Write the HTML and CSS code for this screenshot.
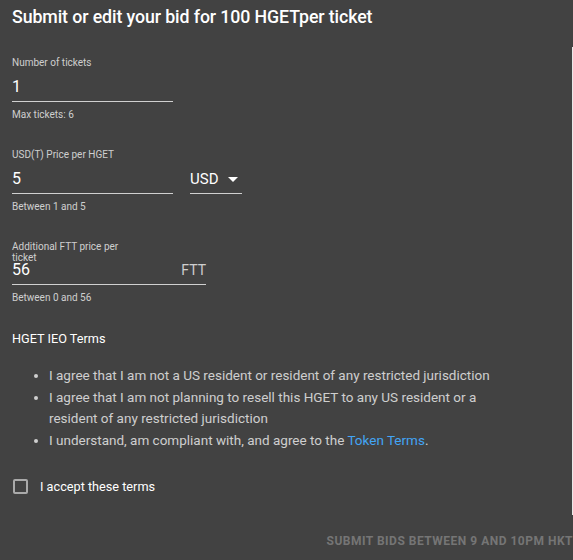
FILE: index.html
```html
<!DOCTYPE html>
<html>
<head>
<meta charset="utf-8">
<link rel="stylesheet" href="styles.css">
</head>
<body>
<div class="dialog">
  <h2 class="title">Submit or edit your bid for 100 HGETper ticket</h2>
  <div class="content">
    <div class="field">
      <label class="label">Number of tickets</label>
      <div class="input w160"><span class="value">1</span></div>
      <div class="helper">Max tickets: 6</div>
    </div>
    <div class="row">
      <div class="field">
        <label class="label">USD(T) Price per HGET</label>
        <div class="input w160"><span class="value">5</span></div>
        <div class="helper">Between 1 and 5</div>
      </div>
      <div class="select">
        <span class="value">USD</span>
        <svg class="arrow" width="10" height="5" viewBox="0 0 10 5"><path d="M0 0 L10 0 L5 5 Z" fill="#fff"/></svg>
      </div>
    </div>
    <div class="field last">
      <label class="label narrow">Additional FTT price per ticket</label>
      <div class="input w194 tight"><span class="value">56</span><span class="suffix">FTT</span></div>
      <div class="helper">Between 0 and 56</div>
    </div>
    <h3 class="terms-title">HGET IEO Terms</h3>
    <ul class="terms">
      <li>I agree that I am not a US resident or resident of any restricted jurisdiction</li>
      <li>I agree that I am not planning to resell this HGET to any US resident or a resident of any restricted jurisdiction</li>
      <li>I understand, am compliant with, and agree to the <a href="#">Token Terms</a>.</li>
    </ul>
    <div class="check">
      <span class="box"></span>
      <span class="check-label">I accept these terms</span>
    </div>
  </div>
  <div class="actions">
    <span class="btn">SUBMIT BIDS BETWEEN 9 AND 10PM HKT</span>
  </div>
  <div class="edge"></div>
</div>
</body>
</html>
```
FILE: styles.css
```css
html, body {
  margin: 0;
  padding: 0;
  background: #424242;
}
body {
  font-family: Roboto, "Liberation Sans", sans-serif;
  color: #fff;
  width: 573px;
  height: 560px;
  overflow: hidden;
}
.dialog {
  position: relative;
  height: 560px;
}
.title {
  margin: 0;
  padding: 5px 12px 0;
  font-size: 17.75px;
  font-weight: 500;
  line-height: 24px;
  letter-spacing: -0.1px;
}
.content {
  padding: 28px 12px 0;
}
.field {
  display: flex;
  flex-direction: column;
}
.label {
  font-size: 10px;
  line-height: 12px;
  color: rgba(255,255,255,0.75);
}
.label.narrow {
  width: 122px;
  line-height: 11px;
}
.input {
  display: flex;
  align-items: flex-end;
  border-bottom: 1px solid #d0d0d0;
  padding: 0 0 4px;
  margin-top: 8px;
  height: 20px;
  box-sizing: content-box;
}
.input.tight {
  margin-top: 0;
  height: 14px;
  padding-bottom: 7px;
  align-items: center;
}
.input.tight .value,
.input.tight .suffix {
  line-height: 14px;
}
.w160 { width: 161px; }
.w194 { width: 194px; justify-content: space-between; }
.value {
  font-size: 16px;
  line-height: 20px;
  color: #fff;
}
.suffix {
  font-size: 14px;
  line-height: 20px;
  color: rgba(255,255,255,0.75);
}
.helper {
  font-size: 10px;
  line-height: 12px;
  margin-top: 7px;
  color: rgba(255,255,255,0.75);
  margin-bottom: 28px;
}
.field.last .helper {
  margin-bottom: 19px;
}
.row {
  display: flex;
  align-items: flex-start;
  gap: 17px;
}
.select {
  margin-top: 20px;
  width: 52px;
  height: 20px;
  padding-bottom: 4px;
  border-bottom: 1px solid #d0d0d0;
  display: flex;
  align-items: center;
  justify-content: space-between;
  box-sizing: content-box;
}
.select .value { font-size: 15px; }
.arrow { margin-right: 4px; }
.terms-title {
  margin: 6px 0 0;
  font-size: 12.7px;
  font-weight: 400;
  line-height: 20px;
}
.terms {
  margin: 16px 0 0;
  padding-left: 37px;
  padding-right: 50px;
  font-size: 13.5px;
  line-height: 21.7px;
  color: rgba(255,255,255,0.75);
}
.terms a {
  color: #42a5f5;
  text-decoration: none;
}
.check {
  display: flex;
  align-items: center;
  gap: 12px;
  margin-top: 25px;
  padding-left: 1px;
}
.box {
  width: 15px;
  height: 15px;
  border: 2px solid #aaa;
  border-radius: 2px;
  box-sizing: border-box;
}
.check-label {
  font-size: 12.7px;
  line-height: 20px;
}
.actions {
  display: flex;
  justify-content: flex-end;
  margin-top: 36px;
}
.btn {
  font-size: 12px;
  font-weight: 700;
  color: #757575;
  line-height: 16px;
  letter-spacing: 0.5px;
  white-space: nowrap;
}
.edge {
  position: absolute;
  right: 0;
  top: 47px;
  width: 1px;
  height: 468px;
  background: #e8e8e8;
}
```
